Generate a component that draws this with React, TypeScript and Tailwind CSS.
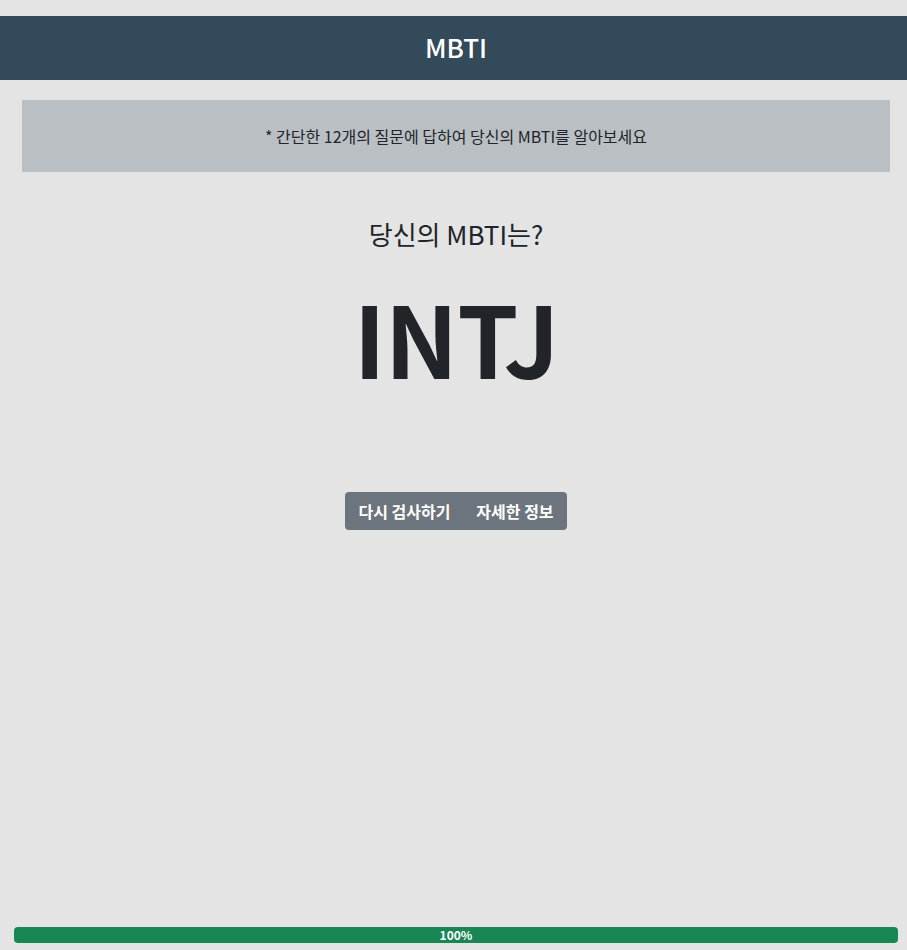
export default function App() {
  return (
    <div className="w-screen overflow-hidden">
      <div
        className="w-[912px] h-screen flex flex-col bg-[#e4e4e4] text-[#212529]"
        style={{ fontFamily: '"Noto Sans CJK KR", "Noto Sans", sans-serif' }}
      >
        {/* 헤더 */}
        <header className="mt-4 h-16 pb-1 bg-[#324a5a] flex items-center justify-center">
          <h1 className="text-[26px] font-medium text-white">MBTI</h1>
        </header>

        {/* 안내 문구 */}
        <div className="mx-[22px] mt-5 h-[72px] bg-[#babfc4] flex items-center justify-center">
          <p className="text-base">* 간단한 12개의 질문에 답하여 당신의 MBTI를 알아보세요</p>
        </div>

        {/* 결과 */}
        <div className="flex flex-col items-center">
          <h2 className="mt-[46px] text-[26px] leading-[32px]">당신의 MBTI는?</h2>
          <div className="mt-[26px] text-[98px] font-bold leading-[120px] tracking-[-1px]">INTJ</div>
          <div className="mt-[96px] flex rounded-[4px] overflow-hidden bg-[#6c757d] text-white text-base font-bold">
            <button className="px-[13px] h-[38px]">다시 검사하기</button>
            <button className="px-[13px] h-[38px]">자세한 정보</button>
          </div>
        </div>

        {/* 진행률 */}
        <div className="mt-auto mx-[14px] mb-[7px] h-4 rounded-[4px] bg-[#198754] flex items-center justify-center">
          <span className="text-xs font-bold text-white leading-none">100%</span>
        </div>
      </div>
    </div>
  );
}
